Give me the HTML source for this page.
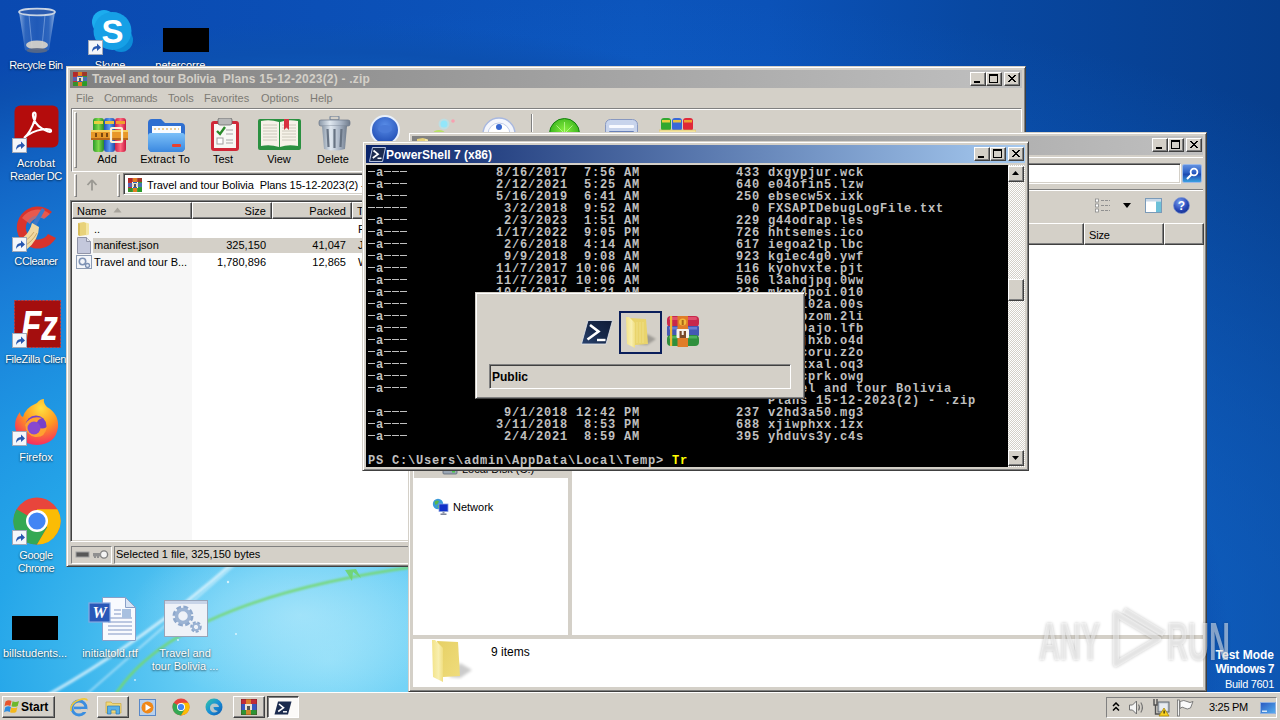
<!DOCTYPE html>
<html><head><meta charset="utf-8"><title>Desktop</title>
<style>
*{box-sizing:border-box;margin:0;padding:0}
html,body{width:1280px;height:720px;overflow:hidden}
body{position:relative;font-family:"Liberation Sans",sans-serif;font-size:11px;color:#000;
background:#0b4eae;}
.abs{position:absolute}
#wall{position:absolute;left:0;top:0;width:1280px;height:720px;
background:
radial-gradient(ellipse 170px 90px at 300px 615px, rgba(200,240,253,.5) 0%, rgba(200,240,253,.25) 50%, rgba(200,240,253,0) 100%),
radial-gradient(ellipse 900px 640px at 330px 660px, #8adcf8 0%, #68cef5 15%, #3cb6ed 28%, #25a6e9 38%, #1e94e2 52%, #197dd7 68%, #1266c6 83%, #0c50b0 95%, rgba(12,80,176,0) 100%),
radial-gradient(ellipse 1150px 640px at 640px 640px, rgba(20,112,218,1) 0%, rgba(20,112,218,.7) 35%, rgba(20,112,218,.4) 65%, rgba(20,112,218,0) 100%),
linear-gradient(90deg,#0a49b0 0%,#0b4fb6 25%,#0c55bc 50%,#0b52b8 60%,#0848a2 76%,#063d8c 100%);}
.win{position:absolute;background:#d4d0c8;border:1px solid;border-color:#d4d0c8 #404040 #404040 #d4d0c8;box-shadow:inset 1px 1px 0 #fff, inset -1px -1px 0 #808080;}
.tbtn{position:absolute;width:16px;height:14px;background:#d4d0c8;border:1px solid;border-color:#fff #404040 #404040 #fff;box-shadow:inset -1px -1px 0 #808080;}
.raised{border:1px solid;border-color:#fff #404040 #404040 #fff;box-shadow:inset -1px -1px 0 #808080, inset 1px 1px 0 #d4d0c8;}
.sunken{border:1px solid;border-color:#808080 #fff #fff #808080;box-shadow:inset 1px 1px 0 #404040, inset -1px -1px 0 #d4d0c8;}
.d{color:transparent;background:repeating-linear-gradient(90deg,#c0c0c0 0,#c0c0c0 7px,transparent 7px,transparent 8px) no-repeat 0 5px/100% 1px}
.t{position:absolute;white-space:nowrap;line-height:13px}
.dl{position:absolute;color:#fff;text-align:center;font-size:11px;line-height:13px;width:90px;text-shadow:0 1px 2px rgba(0,0,0,.55),0 0 2px rgba(0,0,0,.3);white-space:nowrap}
</style></head><body>
<div id="wall"></div>
<svg id="swoosh" class="abs" style="left:0;top:560px" width="420" height="135" viewBox="0 560 420 135">
 <defs><filter id="bl"><feGaussianBlur stdDeviation=".8"/></filter></defs>
 <path d="M30 705 Q140 645 234 562" stroke="#f0fbff" stroke-width="3.200" fill="none" opacity=".7" filter="url(#bl)"/>
 <path d="M80 700 Q160 630 238 562" stroke="#eaf9ff" stroke-width="2" fill="none" opacity=".5" filter="url(#bl)"/>
 <path d="M112 700 Q170 600 420 566" stroke="#74d870" stroke-width="2.400" fill="none" filter="url(#bl)"/>
 <path d="M345 570 L352 581 L353 572 L361 578 L356 569Z" fill="#6fd46c" opacity=".9"/>
 <g fill="#fff" opacity=".7"><circle cx="228" cy="582" r="1.200"/><circle cx="178" cy="640" r="1"/><circle cx="135" cy="680" r="1"/><circle cx="236" cy="634" r="1"/></g>
</svg>
<!-- Recycle bin -->
<svg class="abs" style="left:17px;top:7px" width="40" height="48" viewBox="0 0 40 48"><defs><linearGradient id="rb" x1="0" y1="0" x2="1" y2="0"><stop offset="0" stop-color="#b8d0f0" stop-opacity=".75"/><stop offset=".18" stop-color="#4a7cc8" stop-opacity=".55"/><stop offset=".5" stop-color="#3a6cc0" stop-opacity=".45"/><stop offset=".82" stop-color="#4a7cc8" stop-opacity=".55"/><stop offset="1" stop-color="#b8d0f0" stop-opacity=".75"/></linearGradient></defs><path d="M2 5 L8 43 Q20 48 32 43 L38 5Z" fill="url(#rb)"/><path d="M12 8 L15 40 M28 8 L25 40" stroke="#a8c4ec" stroke-width="1" opacity=".5"/><ellipse cx="20" cy="5" rx="18" ry="3.400" fill="#2c5cb0" stroke="#c8d4e4" stroke-width="1.700"/><ellipse cx="20" cy="38" rx="11" ry="4.500" fill="#dcd6ca" opacity=".9"/><ellipse cx="20" cy="43.500" rx="10.500" ry="2.600" fill="#5c6880" opacity=".85"/></svg>
<div class="dl" style="left:-9px;top:59px;letter-spacing:-.4px">Recycle Bin</div>
<!-- Skype -->
<svg class="abs" style="left:88px;top:8px" width="48" height="48" viewBox="0 0 48 48"><circle cx="16" cy="14" r="12" fill="#1cacee"/><circle cx="33" cy="32" r="12" fill="#0c8cd8"/><circle cx="24.500" cy="23" r="19" fill="#16a0e6"/><text x="24.500" y="35" text-anchor="middle" font-family="Liberation Sans,sans-serif" font-weight="bold" font-size="33" fill="#fff">S</text><rect x=".5" y="32.500" width="14" height="14" fill="#f4f6fa" stroke="#a0a8b8"/><path d="M4 44 Q4 38 9 38 V35.500 L13 39.500 L9 43 V40.500 Q6 40.500 4 44Z" fill="#2858b0"/></svg>
<div class="dl" style="left:65px;top:59px">Skype</div>
<!-- redacted -->
<div class="abs" style="left:163px;top:28px;width:46px;height:24px;background:#000"></div>
<div class="dl" style="left:140px;top:59px">petercorre...</div>
<!-- Acrobat -->
<svg class="abs" style="left:12px;top:105px" width="48" height="48" viewBox="0 0 48 48"><rect x="2.5" y=".5" width="44" height="42" rx="6" fill="#b40c0c"/><path d="M12 33 Q19 27 23 14 Q24.5 8 22.5 7.5 Q20 7.5 21.5 13 Q24 22 36 26.5 Q39.5 27.5 39 25.5 Q38 23.5 30 24.5 Q20 26 12 33Z" fill="none" stroke="#fff" stroke-width="2.2"/><rect x=".5" y="33.5" width="14" height="14" fill="#f4f6fa" stroke="#a0a8b8"/><path d="M4 45 Q4 39 9 39 V36.5 L13 40.5 L9 44 V41.5 Q6 41.5 4 45Z" fill="#2858b0"/></svg>
<div class="dl" style="left:-9px;top:157px">Acrobat</div>
<div class="dl" style="left:-9px;top:170px;letter-spacing:-.35px">Reader DC</div>
<!-- CCleaner -->
<svg class="abs" style="left:12px;top:204px" width="48" height="48" viewBox="0 0 48 48"><path d="M40 8 A21 21 0 1 0 44 34 L36 30 A12 12 0 1 1 33 14Z" fill="#d8342c"/><path d="M38 10 A19 19 0 0 0 10 14 L18 20 A10 10 0 0 1 32 15Z" fill="#f06a5c" opacity=".7"/><path d="M30 4 L33 6 L24 22 L20 20Z" fill="#3c78c8"/><path d="M20 19 L27 23 Q27 36 14 46 Q6 44 3 37 Q16 34 20 19Z" fill="#f0d8a0"/><path d="M8 38 Q16 37 22 28 M12 42 Q20 38 25 29" stroke="#c8a868" stroke-width="1" fill="none"/><rect x=".5" y="33.5" width="14" height="14" fill="#f4f6fa" stroke="#a0a8b8"/><path d="M4 45 Q4 39 9 39 V36.5 L13 40.5 L9 44 V41.5 Q6 41.5 4 45Z" fill="#2858b0"/></svg>
<div class="dl" style="left:-9px;top:255px;letter-spacing:-.4px">CCleaner</div>
<!-- FileZilla -->
<svg class="abs" style="left:12px;top:300px" width="50" height="50" viewBox="0 0 50 50"><rect x="2.500" y=".5" width="46" height="47" fill="#a40e0e" stroke="#c43c3c" stroke-dasharray="2 1.500"/><text x="9" y="40" font-family="Liberation Sans,sans-serif" font-weight="bold" font-style="italic" font-size="42" fill="#fff" textLength="37" lengthAdjust="spacingAndGlyphs">Fz</text><rect x=".5" y="33.500" width="14" height="14" fill="#f4f6fa" stroke="#a0a8b8"/><path d="M4 45 Q4 39 9 39 V36.500 L13 40.500 L9 44 V41.500 Q6 41.500 4 45Z" fill="#2858b0"/></svg>
<div class="abs" style="left:0;top:352px;width:66px;height:16px;overflow:hidden"><div class="dl" style="left:-3px;top:1px;width:80px;letter-spacing:-.35px">FileZilla Client</div></div>
<!-- Firefox -->
<svg class="abs" style="left:12px;top:398px" width="50" height="50" viewBox="0 0 50 50"><defs><radialGradient id="ff" cx=".6" cy=".2" r=".9"><stop offset="0" stop-color="#ffe040"/><stop offset=".45" stop-color="#ff9820"/><stop offset=".85" stop-color="#f83858"/><stop offset="1" stop-color="#d82878"/></radialGradient></defs><path d="M25 5 Q28 1 32 1 Q31 5 35 9 Q47 16 46 29 Q44 46 25 47 Q5 46 3 28 Q3 20 8 14 Q8 18 11 19 Q13 10 25 5Z" fill="url(#ff)"/><circle cx="24" cy="28" r="10.5" fill="#7840c8"/><path d="M13 27 Q18 17 30 20 Q24 22 25 27 Q28 33 35 29 Q33 40 23 39 Q14 37 13 27Z" fill="#ffa030"/><circle cx="22" cy="30" r="6.5" fill="#8848d0"/><rect x=".5" y="33.5" width="14" height="14" fill="#f4f6fa" stroke="#a0a8b8"/><path d="M4 45 Q4 39 9 39 V36.5 L13 40.5 L9 44 V41.5 Q6 41.5 4 45Z" fill="#2858b0"/></svg>
<div class="dl" style="left:-9px;top:451px">Firefox</div>
<!-- Chrome -->
<svg class="abs" style="left:12px;top:497px" width="50" height="50" viewBox="0 0 50 50"><circle cx="25" cy="24" r="23.5" fill="#e8453c"/><path d="M25 24 L4.6 12.2 A23.5 23.5 0 0 0 25 47.5 L35.4 30Z" fill="#34a853"/><path d="M25 24 L35.4 30 L25 47.5 A23.5 23.5 0 0 0 45.4 12.2 H25Z" fill="#fbbc05"/><circle cx="25" cy="24" r="11" fill="#fff"/><circle cx="25" cy="24" r="8.6" fill="#4285f4"/><rect x=".5" y="33.5" width="14" height="14" fill="#f4f6fa" stroke="#a0a8b8"/><path d="M4 45 Q4 39 9 39 V36.5 L13 40.5 L9 44 V41.5 Q6 41.5 4 45Z" fill="#2858b0"/></svg>
<div class="dl" style="left:-9px;top:549px;letter-spacing:-.35px">Google</div>
<div class="dl" style="left:-9px;top:562px;letter-spacing:-.45px">Chrome</div>
<!-- redacted 2 -->
<div class="abs" style="left:12px;top:616px;width:46px;height:24px;background:#000"></div>
<div class="dl" style="left:-10px;top:647px">billstudents...</div>
<!-- word doc -->
<svg class="abs" style="left:88px;top:596px" width="49" height="46" viewBox="0 0 49 46"><path d="M14.5 1.500 H37.5 L47.500 11.500 V44.500 H14.500Z" fill="#f8fafe" stroke="#8aa0c8"/><path d="M37.500 1.500 V11.500 H47.500Z" fill="#d8e4f4" stroke="#8aa0c8"/><g stroke="#a8b8d8" stroke-width="1.300"><path d="M20 22 H44 M20 26 H44 M20 30 H44 M20 34 H44 M20 38 H44 M26 14 H33 M26 18 H33"/></g><rect x="34" y="13" width="9" height="9" fill="#a8c0e0"/><rect x="1" y="7" width="21" height="19" fill="#2858b8" stroke="#88a8e0" stroke-width="1.200"/><text x="11.500" y="22" text-anchor="middle" font-family="Liberation Serif,serif" font-weight="bold" font-style="italic" font-size="16" fill="#fff">W</text></svg>
<div class="dl" style="left:65px;top:647px">initialtold.rtf</div>
<!-- batch -->
<svg class="abs" style="left:164px;top:600px" width="45" height="38" viewBox="0 0 45 38"><rect x=".5" y=".5" width="43" height="36" fill="#eef2f8" stroke="#98a4b8"/><rect x="1" y="1" width="42" height="3" fill="#c8d4e8"/><circle cx="19" cy="16" r="8" fill="none" stroke="#8ea8cc" stroke-width="5" stroke-dasharray="4.200 2.100"/><circle cx="19" cy="16" r="6.500" fill="none" stroke="#9cb4d4" stroke-width="3.500"/><circle cx="32" cy="27" r="4" fill="none" stroke="#8ea8cc" stroke-width="3.500" stroke-dasharray="2.500 1.400"/><circle cx="32" cy="27" r="3.200" fill="none" stroke="#9cb4d4" stroke-width="2"/></svg>
<div class="dl" style="left:140px;top:647px">Travel and</div>
<div class="dl" style="left:140px;top:660px">tour Bolivia ...</div>
<!-- test mode -->
<div class="t" style="left:1175px;top:648px;width:99px;text-align:right;color:#fff;font-weight:bold;font-size:12px;line-height:14px">Test Mode</div>
<div class="t" style="left:1175px;top:662px;width:99px;text-align:right;color:#fff;font-weight:bold;font-size:12px;line-height:14px;letter-spacing:-.45px">Windows 7</div>
<div class="t" style="left:1175px;top:678px;width:99px;text-align:right;color:#fff;font-size:11px;letter-spacing:-.3px">Build 7601</div>
<!--DESKTOP_END-->
<div id="winrar" class="win" style="left:66px;top:66px;width:960px;height:501px">
 <div class="abs" style="left:3px;top:3px;width:952px;height:18px;background:linear-gradient(90deg,#808080,#c0c0c0)"></div>
 <svg class="abs" style="left:5px;top:4px" width="16" height="16" viewBox="0 0 16 16"><rect x="1" y="1" width="4" height="14" fill="#c03030"/><rect x="6" y="1" width="4" height="14" fill="#3060c0"/><rect x="11" y="1" width="4" height="14" fill="#30a030"/><rect x="1" y="1" width="14" height="4" fill="#b02828" opacity=".85"/><rect x="1" y="6" width="14" height="4" fill="#4868c8" opacity=".85"/><rect x="1" y="11" width="14" height="4" fill="#2a9a2a" opacity=".9"/><rect x="6" y="1" width="4" height="4" fill="#e08020"/><rect x="6" y="11" width="4" height="4" fill="#e08020"/><rect x="5" y="6" width="6" height="4" fill="#e8e0d0"/><rect x="7" y="7" width="2" height="3" fill="#555"/></svg>
 <div class="t" style="left:25px;top:5px;font-weight:bold;font-size:12px;color:#d4d0c8;line-height:14px;white-space:pre"><span style="letter-spacing:-.22px">Travel and tour Bolivia</span><span style="letter-spacing:.2px">  Plans 15-12-2023(2) - .zip</span></div>
 <div class="tbtn" style="left:903px;top:5px"><div class="abs" style="left:3px;top:8px;width:6px;height:2px;background:#000"></div></div>
 <div class="tbtn" style="left:919px;top:5px"><div class="abs" style="left:2px;top:1px;width:9px;height:9px;border:1px solid #000;border-top-width:2px"></div></div>
 <div class="tbtn" style="left:937px;top:5px"><svg class="abs" style="left:3px;top:2px" width="8" height="7" viewBox="0 0 8 7"><path d="M0 0 L7 7 M1 0 L8 7 M7 0 L0 7 M8 0 L1 7" stroke="#000" stroke-width="1" shape-rendering="crispEdges"/></svg></div>
 <!-- menu -->
 <div class="t" style="left:9px;top:25px;color:#7c7a74">File</div>
 <div class="t" style="left:37px;top:25px;color:#7c7a74;letter-spacing:-.4px">Commands</div>
 <div class="t" style="left:101px;top:25px;color:#7c7a74">Tools</div>
 <div class="t" style="left:137px;top:25px;color:#7c7a74">Favorites</div>
 <div class="t" style="left:194px;top:25px;color:#7c7a74">Options</div>
 <div class="t" style="left:243px;top:25px;color:#7c7a74">Help</div>
 <!-- toolbar frame -->
 <div class="abs" style="left:4px;top:41px;width:951px;height:64px;border:1px solid;border-color:#808080 #fff #fff #808080;box-shadow:inset 1px 1px 0 #fff"></div>
 <div class="abs" style="left:7px;top:45px;width:3px;height:56px;border:1px solid;border-color:#fff #808080 #808080 #fff"></div>
  <!-- Add -->
 <svg class="abs" style="left:24px;top:50px" width="37" height="36" viewBox="0 0 37 36"><defs><linearGradient id="bk1" x1="0" x2="1"><stop offset="0" stop-color="#2a9a2a"/><stop offset=".5" stop-color="#7ed84a"/><stop offset="1" stop-color="#2a8a2a"/></linearGradient><linearGradient id="bk2" x1="0" x2="1"><stop offset="0" stop-color="#2050b8"/><stop offset=".5" stop-color="#5a9af0"/><stop offset="1" stop-color="#2048a8"/></linearGradient><linearGradient id="bk3" x1="0" x2="1"><stop offset="0" stop-color="#d02048"/><stop offset=".5" stop-color="#ff6a80"/><stop offset="1" stop-color="#c81840"/></linearGradient></defs><rect x="2" y="1" width="11" height="34" rx="3" fill="url(#bk1)"/><rect x="13" y="1" width="11" height="34" rx="3" fill="url(#bk2)"/><rect x="24" y="1" width="11" height="34" rx="3" fill="url(#bk3)"/><rect x="3" y="4" width="9" height="3" fill="#e8d040"/><rect x="14" y="4" width="9" height="3" fill="#e8c040"/><rect x="25" y="4" width="9" height="3" fill="#f0a030"/><rect x="0" y="13" width="37" height="10" fill="#e89828"/><rect x="0" y="13" width="37" height="2" fill="#f8d060"/><rect x="0" y="21" width="37" height="2" fill="#b86818"/><rect x="20" y="11" width="11" height="14" rx="1" fill="none" stroke="#f8f0d8" stroke-width="2.2"/><rect x="4" y="16" width="2" height="4" fill="#7a4810"/><rect x="10" y="16" width="2" height="4" fill="#7a4810"/><rect x="15" y="16" width="2" height="4" fill="#7a4810"/></svg>
 <div class="t" style="left:18px;top:86px;width:44px;text-align:center">Add</div>
 <!-- Extract To -->
 <svg class="abs" style="left:80px;top:50px" width="40" height="36" viewBox="0 0 40 36"><defs><linearGradient id="ex1" x1="0" y1="0" x2="0" y2="1"><stop offset="0" stop-color="#7cc0f8"/><stop offset="1" stop-color="#3a88e0"/></linearGradient></defs><path d="M1 6 Q1 2 5 2 H14 L18 6 H34 Q38 6 38 10 V30 Q38 35 33 35 H6 Q1 35 1 30Z" fill="#2f6fd0"/><rect x="5" y="9" width="29" height="12" fill="#f8fbff"/><path d="M7 12 H32" stroke="#e0a030" stroke-width="1.2" stroke-dasharray="2 2"/><path d="M1 19 Q1 16 4 16 H35 Q38 16 38 19 V30 Q38 35 33 35 H6 Q1 35 1 30Z" fill="url(#ex1)"/><rect x="25" y="27" width="9" height="3" rx="1" fill="#e84030"/></svg>
 <div class="t" style="left:68px;top:86px;width:60px;text-align:center;letter-spacing:.1px">Extract To</div>
 <!-- Test -->
 <svg class="abs" style="left:143px;top:51px" width="30" height="34" viewBox="0 0 30 34"><rect x="1" y="3" width="28" height="30" rx="3" fill="#d02838"/><rect x="4" y="6" width="22" height="24" fill="#f8f8f4"/><rect x="8" y="0" width="14" height="7" rx="2" fill="#b8b8b8" stroke="#686868" stroke-width=".8"/><path d="M7 13 L10 16 L15 9" stroke="#2a8a2a" stroke-width="2.4" fill="none"/><rect x="7" y="20" width="6" height="6" fill="#fff" stroke="#a0a0a0"/><path d="M16 12 H23 M16 16 H23 M16 22 H23 M16 25 H23" stroke="#a8a8a8" stroke-width="1.2"/></svg>
 <div class="t" style="left:134px;top:86px;width:44px;text-align:center">Test</div>
 <!-- View -->
 <svg class="abs" style="left:191px;top:51px" width="43" height="33" viewBox="0 0 43 33"><rect x="0" y="1" width="43" height="31" rx="2" fill="#2a9040"/><path d="M3 3 Q12 1 21 4 V29 Q12 26 3 28Z" fill="#f6f2e8"/><path d="M40 3 Q30 1 22 4 V29 Q30 26 40 28Z" fill="#f6f2e8"/><g stroke="#c8c4b8" stroke-width=".9"><path d="M5 7 H19 M5 10 H19 M5 13 H19 M5 16 H19 M5 19 H19 M5 22 H19 M24 7 H38 M24 10 H38 M24 13 H38 M24 16 H38 M24 19 H38 M24 22 H38"/></g><path d="M26 1 H31 V12 L28.500 9.500 L26 12Z" fill="#d83040"/></svg>
 <div class="t" style="left:190px;top:86px;width:44px;text-align:center">View</div>
 <!-- Delete -->
 <svg class="abs" style="left:251px;top:49px" width="33" height="36" viewBox="0 0 33 36"><defs><linearGradient id="dl1" x1="0" x2="1"><stop offset="0" stop-color="#8a98a8"/><stop offset=".35" stop-color="#e0e8f0"/><stop offset=".7" stop-color="#a8b4c4"/><stop offset="1" stop-color="#707c8c"/></linearGradient></defs><rect x="12" y="0" width="9" height="4" rx="1.500" fill="none" stroke="#8894a4" stroke-width="1.400"/><rect x="1" y="4" width="31" height="6" rx="2" fill="url(#dl1)" stroke="#6a7686" stroke-width=".7"/><path d="M4 10 H29 L27 33 Q16.500 36 6 33Z" fill="url(#dl1)"/><path d="M9.500 13 L10.500 31 M16.500 13 V32 M23.500 13 L22.500 31" stroke="#687484" stroke-width="2.200"/></svg>
 <div class="t" style="left:243px;top:86px;width:46px;text-align:center">Delete</div>
 <!-- Find -->
 <svg class="abs" style="left:301px;top:46px" width="34" height="34" viewBox="0 0 34 34"><defs><radialGradient id="fd" cx=".5" cy=".35" r=".7"><stop offset="0" stop-color="#5a8ee8"/><stop offset="1" stop-color="#1c48b0"/></radialGradient></defs><circle cx="17" cy="17" r="14" fill="url(#fd)" stroke="#e8f0fc" stroke-width="2"/><ellipse cx="17" cy="16" rx="7" ry="4" fill="#4a7ad8"/></svg>
 <!-- Wizard -->
 <svg class="abs" style="left:364px;top:50px" width="28" height="20" viewBox="0 0 28 20"><circle cx="13" cy="7" r="3.500" fill="#7ce0f8"/><circle cx="13" cy="7" r="5.500" fill="#a8ecfc" opacity=".5"/><circle cx="22" cy="4" r="1.800" fill="#f8a0b0"/><ellipse cx="8" cy="16" rx="6" ry="3" fill="#b8e068"/><path d="M14 16 L17 19" stroke="#404040" stroke-width="2"/></svg>
 <!-- Info -->
 <svg class="abs" style="left:415px;top:50px" width="34" height="34" viewBox="0 0 34 34"><circle cx="17" cy="17" r="16" fill="#f4f6fc" stroke="#a8b8e0" stroke-width="1.400"/><circle cx="17" cy="17" r="11" fill="#fff" stroke="#c0cce8"/><circle cx="17" cy="10" r="3" fill="#3868d0"/><rect x="14" y="15" width="6" height="12" fill="#3868d0"/></svg>
 <div class="abs" style="left:464px;top:47px;width:2px;height:38px;border-left:1px solid #808080;border-right:1px solid #fff"></div>
 <!-- VirusScan -->
 <svg class="abs" style="left:482px;top:51px" width="31" height="31" viewBox="0 0 31 31"><defs><radialGradient id="vs" cx=".5" cy=".4" r=".7"><stop offset="0" stop-color="#88f040"/><stop offset="1" stop-color="#1c9c10"/></radialGradient></defs><circle cx="15.500" cy="15.500" r="15" fill="url(#vs)" stroke="#148010"/><path d="M15.500 4 V27 M4 15.500 H27 M7.500 7.500 L23.500 23.500 M23.500 7.500 L7.500 23.500" stroke="#c8ffa0" stroke-width="1" opacity=".7"/></svg>
 <!-- Comment -->
 <svg class="abs" style="left:538px;top:52px" width="33" height="28" viewBox="0 0 33 28"><rect x=".5" y=".5" width="32" height="27" rx="5" fill="#c8d4ec" stroke="#8898c0"/><rect x="4" y="6" width="25" height="3" rx="1" fill="#f8faff"/><rect x="4" y="12" width="25" height="3" rx="1" fill="#6880b8"/><rect x="4" y="18" width="25" height="3" rx="1" fill="#f8faff"/></svg>
 <!-- SFX -->
 <svg class="abs" style="left:592px;top:50px" width="37" height="32" viewBox="0 0 37 32"><rect x="2" y="1" width="10" height="13" rx="3" fill="#30a830"/><rect x="13" y="1" width="10" height="13" rx="3" fill="#3868d8"/><rect x="24" y="1" width="10" height="13" rx="3" fill="#e02838"/><rect x="3" y="3" width="8" height="2.500" fill="#e8d040"/><rect x="14" y="3" width="8" height="2.500" fill="#e8c040"/><rect x="25" y="3" width="8" height="2.500" fill="#f0a030"/><rect x="0" y="13" width="37" height="5" fill="#f4e4a0" stroke="#d0b860" stroke-width=".6"/></svg>

 <!-- address row -->
 <div class="abs" style="left:7px;top:107px;width:3px;height:23px;border:1px solid;border-color:#fff #808080 #808080 #fff"></div>
 <svg class="abs" style="left:18px;top:111px" width="14" height="14" viewBox="0 0 14 14"><path d="M7 2 L2.5 7 M7 2 L11.5 7 M7 2 V12.5" stroke="#9a9892" stroke-width="1.8" fill="none"/></svg>
 <div class="abs" style="left:50px;top:107px;width:3px;height:23px;border:1px solid;border-color:#fff #808080 #808080 #fff"></div>
 <div class="abs sunken" style="left:56px;top:106px;width:900px;height:22px;background:#fff"></div>
 <svg class="abs" style="left:60px;top:110px" width="16" height="16" viewBox="0 0 16 16"><rect x="1" y="1" width="4" height="14" fill="#c03030"/><rect x="6" y="1" width="4" height="14" fill="#3060c0"/><rect x="11" y="1" width="4" height="14" fill="#30a030"/><rect x="1" y="1" width="14" height="4" fill="#b02828" opacity=".85"/><rect x="1" y="6" width="14" height="4" fill="#4868c8" opacity=".85"/><rect x="1" y="11" width="14" height="4" fill="#2a9a2a" opacity=".9"/><rect x="6" y="1" width="4" height="4" fill="#e08020"/><rect x="6" y="11" width="4" height="4" fill="#e08020"/><rect x="5" y="6" width="6" height="4" fill="#e8e0d0"/><rect x="7" y="7" width="2" height="3" fill="#555"/></svg>
 <div class="t" style="left:80px;top:112px;white-space:pre;letter-spacing:-.1px">Travel and tour Bolivia  Plans 15-12-2023(2) - .zip</div>
 <!-- list -->
 <div class="abs sunken" style="left:3px;top:133px;width:953px;height:342px;background:#fff"></div>
 <div class="abs" style="left:5px;top:153px;width:120px;height:320px;background:#f7f7f7"></div>
 <div class="abs raised" style="left:5px;top:135px;width:120px;height:17px;background:#d4d0c8"></div>
 <div class="abs raised" style="left:125px;top:135px;width:80px;height:17px;background:#d4d0c8"></div>
 <div class="abs raised" style="left:205px;top:135px;width:80px;height:17px;background:#d4d0c8"></div>
 <div class="abs raised" style="left:285px;top:135px;width:80px;height:17px;background:#d4d0c8"></div>
 <div class="t" style="left:10px;top:138px">Name</div>
 <svg class="abs" style="left:46px;top:140px" width="9" height="6" viewBox="0 0 9 6"><path d="M4.5 .5 L8.5 5.5 H.5Z" fill="#a8a49c"/></svg>
 <div class="t" style="left:125px;top:138px;width:74px;text-align:right">Size</div>
 <div class="t" style="left:205px;top:138px;width:74px;text-align:right">Packed</div>
 <div class="t" style="left:290px;top:138px">Type</div>
 <!-- rows -->
 <svg class="abs" style="left:9px;top:154px" width="16" height="16" viewBox="0 0 16 16"><path d="M2 2 L8 1 L10 2 V14 L4 15 L2 14Z" fill="#e8d27a"/><path d="M8 1 L13 2.5 V13.5 L10 14.5 V2Z" fill="#f4e6a4"/><path d="M2 2 V14 L4 15 V3Z" fill="#d8bd5c"/></svg>
 <div class="t" style="left:27px;top:156px">..</div>
 <div class="t" style="left:291px;top:156px">File folder</div>
 <div class="abs" style="left:26px;top:171px;width:928px;height:15px;background:#d4d0c8"></div>
 <svg class="abs" style="left:10px;top:170px" width="14" height="17" viewBox="0 0 14 17"><path d="M.5 .5 H9.5 L13.5 4.5 V16.5 H.5Z" fill="#c4c8dc" stroke="#9094a8"/><path d="M9.5 .5 V4.5 H13.5" fill="#e4e6f0" stroke="#9094a8"/></svg>
 <div class="t" style="left:27px;top:172px">manifest.json</div>
 <div class="t" style="left:125px;top:172px;width:74px;text-align:right">325,150</div>
 <div class="t" style="left:205px;top:172px;width:74px;text-align:right">41,047</div>
 <div class="t" style="left:291px;top:172px">JSON File</div>
 <svg class="abs" style="left:9px;top:188px" width="17" height="16" viewBox="0 0 17 16"><rect x=".5" y=".5" width="15" height="13" fill="#f4f6fa" stroke="#8e9cb4"/><circle cx="6.5" cy="6.5" r="3.2" fill="none" stroke="#7e92b4" stroke-width="1.6"/><circle cx="11.5" cy="10.5" r="2" fill="#e8eef8" stroke="#7e92b4" stroke-width="1.3"/></svg>
 <div class="t" style="left:27px;top:189px">Travel and tour B...</div>
 <div class="t" style="left:125px;top:189px;width:74px;text-align:right">1,780,896</div>
 <div class="t" style="left:205px;top:189px;width:74px;text-align:right">12,865</div>
 <div class="t" style="left:291px;top:189px">Windows Batch File</div>
 <!-- status -->
 <div class="abs" style="left:4px;top:479px;width:41px;height:18px;border:1px solid;border-color:#808080 #fff #fff #808080"></div>
 <div class="abs" style="left:47px;top:479px;width:909px;height:18px;border:1px solid;border-color:#808080 #fff #fff #808080"></div>
 <svg class="abs" style="left:8px;top:482px" width="36" height="12" viewBox="0 0 36 12"><rect x="1" y="3" width="13" height="5" fill="#585858" stroke="#a0a0a0"/><circle cx="29" cy="5.5" r="3.6" fill="#f4f4f4" stroke="#808080" stroke-width="1.4"/><rect x="18" y="4" width="8" height="3.4" fill="#909090"/><rect x="19" y="7" width="2" height="2" fill="#909090"/><rect x="22" y="7" width="2" height="2" fill="#909090"/></svg>
 <div class="t" style="left:49px;top:481px">Selected 1 file, 325,150 bytes</div>
</div>
<!--WINRAR_END-->
<div id="explorer" class="win" style="left:408px;top:132px;width:799px;height:560px">
 <div class="abs" style="left:3px;top:3px;width:791px;height:19px;background:linear-gradient(90deg,#808080,#c0c0c0)"></div>
 <svg class="abs" style="left:6px;top:4px" width="16" height="16" viewBox="0 0 16 16"><path d="M2 2 L8 1 L10 2 V14 L4 15 L2 14Z" fill="#e8d27a"/><path d="M8 1 L13 2.5 V13.5 L10 14.5 V2Z" fill="#f4e6a4"/></svg>
 <div class="t" style="left:26px;top:6px;font-weight:bold;font-size:12px;color:#d4d0c8;line-height:14px">Public</div>
 <div class="tbtn" style="left:743px;top:5px"><div class="abs" style="left:3px;top:8px;width:6px;height:2px;background:#000"></div></div>
 <div class="tbtn" style="left:759px;top:5px"><div class="abs" style="left:2px;top:1px;width:9px;height:9px;border:1px solid #000;border-top-width:2px"></div></div>
 <div class="tbtn" style="left:777px;top:5px"><svg class="abs" style="left:3px;top:2px" width="8" height="7" viewBox="0 0 8 7"><path d="M0 0 L7 7 M1 0 L8 7 M7 0 L0 7 M8 0 L1 7" stroke="#000" stroke-width="1" shape-rendering="crispEdges"/></svg></div>
 <!-- address/search row -->
 <div class="abs" style="left:3px;top:24px;width:791px;height:1px;background:#fff"></div>
 <div class="abs sunken" style="left:40px;top:30px;width:560px;height:21px;background:#fff"></div>
 <div class="abs sunken" style="left:606px;top:30px;width:166px;height:21px;background:#fff"></div>
 <div class="abs" style="left:773px;top:31px;width:20px;height:19px;border-radius:2px;background:linear-gradient(180deg,#5f8fe0 0%,#2c5fc4 45%,#1c48b0 55%,#3aa0e0 100%);border:1px solid #9ab8e8"></div>
 <svg class="abs" style="left:776px;top:33px" width="15" height="15" viewBox="0 0 15 15"><circle cx="9" cy="6" r="3.4" fill="none" stroke="#fff" stroke-width="1.8"/><path d="M6.5 8.5 L2 13" stroke="#fff" stroke-width="2.2"/></svg>
 <div class="abs" style="left:3px;top:56px;width:791px;height:1px;background:#808080"></div>
 <div class="abs" style="left:3px;top:57px;width:791px;height:1px;background:#fff"></div>
 <!-- toolbar -->
 <div class="t" style="left:14px;top:67px;font-size:12px">Organize ▾</div>
 <svg class="abs" style="left:686px;top:65px" width="16" height="15" viewBox="0 0 16 15"><g fill="#fff" stroke="#8a8a8a" stroke-width=".8"><rect x=".5" y="1" width="3" height="3"/><rect x=".5" y="6" width="3" height="3"/><rect x=".5" y="11" width="3" height="3"/></g><g stroke="#909090" stroke-width="1"><path d="M6 2.5 H15 M6 7.5 H15 M6 12.5 H15" stroke-dasharray="3 1"/></g></svg>
 <svg class="abs" style="left:714px;top:70px" width="8" height="5" viewBox="0 0 8 5"><path d="M0 0 H8 L4 5Z" fill="#000"/></svg>
 <svg class="abs" style="left:736px;top:65px" width="17" height="15" viewBox="0 0 17 15"><rect x=".5" y=".5" width="16" height="14" fill="#fff" stroke="#7a9ab8"/><rect x="1" y="1" width="15" height="2.5" fill="#c8d8e8"/><rect x="11" y="3.5" width="5" height="10.5" fill="#6cc0d8"/></svg>
 <svg class="abs" style="left:764px;top:64px" width="17" height="17" viewBox="0 0 17 17"><defs><radialGradient id="hg" cx=".4" cy=".3" r=".8"><stop offset="0" stop-color="#7aa0f0"/><stop offset=".6" stop-color="#2848b8"/><stop offset="1" stop-color="#102880"/></radialGradient></defs><circle cx="8.5" cy="8.5" r="8" fill="url(#hg)" stroke="#8098d0" stroke-width=".8"/><text x="8.5" y="13" text-anchor="middle" font-family="Liberation Sans,sans-serif" font-weight="bold" font-size="12" fill="#fff">?</text></svg>
 <!-- nav pane + content -->
 <div class="abs" style="left:4px;top:89px;width:790px;height:465px;background:#fff"></div>
 <div class="abs" style="left:159px;top:89px;width:4px;height:413px;background:#d4d0c8"></div>
 <!-- header -->
 <div class="abs" style="left:163px;top:89px;width:632px;height:23px;background:#d4d0c8"></div>
 <div class="abs raised" style="left:163px;top:90px;width:512px;height:22px;background:#d4d0c8"></div>
 <div class="abs raised" style="left:675px;top:90px;width:80px;height:22px;background:#d4d0c8"></div>
 <div class="abs raised" style="left:755px;top:90px;width:40px;height:22px;background:#d4d0c8"></div>
 <div class="t" style="left:680px;top:96px;font-size:11px;letter-spacing:-.2px">Size</div>
 <div class="t" style="left:172px;top:96px;font-size:11px">Name</div>
 <!-- nav items -->
 <div class="abs" style="left:5px;top:330px;width:154px;height:15px;background:#d4d0c8"></div>
 <svg class="abs" style="left:33px;top:330px" width="16" height="14" viewBox="0 0 16 14"><rect x="1" y="3" width="14" height="8" rx="1" fill="#9aa6b4" stroke="#5a6674" stroke-width=".8"/><rect x="2" y="4" width="12" height="3" fill="#c8d4e0"/><rect x="10" y="8" width="3" height="1.500" fill="#48c848"/></svg><div class="t" style="left:53px;top:330px;font-size:11px">Local Disk (C:)</div>
 <svg class="abs" style="left:23px;top:365px" width="18" height="18" viewBox="0 0 18 18"><circle cx="6" cy="6" r="5.2" fill="#3a9ad8"/><path d="M2.5 4 Q5 1.5 7 3.5 Q6 6 3.5 7Z" fill="#58b848"/><path d="M6 7 Q8.5 6 9 9 Q7 10.5 5.5 9.5Z" fill="#58b848"/><rect x="7" y="6" width="9" height="7.5" fill="#1030c8" stroke="#88a0e0" stroke-width=".8"/><rect x="10.5" y="13.5" width="2" height="2" fill="#8890a8"/><rect x="8.5" y="15.5" width="6" height="1.4" fill="#707890"/></svg>
 <div class="t" style="left:44px;top:368px">Network</div>
 <!-- details pane -->
 <div class="abs" style="left:4px;top:502px;width:790px;height:4px;background:#d4d0c8"></div>
 <svg class="abs" style="left:22px;top:506px" width="44" height="44" viewBox="0 0 44 44"><defs><linearGradient id="fg1" x1="0" y1="0" x2="1" y2="0"><stop offset="0" stop-color="#f3e388"/><stop offset=".6" stop-color="#f8efb0"/><stop offset="1" stop-color="#f0de80"/></linearGradient><linearGradient id="fg2" x1="0" y1="0" x2="1" y2="1"><stop offset="0" stop-color="#e6d064"/><stop offset="1" stop-color="#efdc7c"/></linearGradient><filter id="fb"><feGaussianBlur stdDeviation="1.600"/></filter></defs><path d="M29 24 L41 31 L29 39 L18 38Z" fill="#000" opacity=".2" filter="url(#fb)"/><path d="M6 2 L27 3 L29 37 L12 38Z" fill="url(#fg2)"/><path d="M1 1 L4 1 L12 9 V43 L2 38Z" fill="url(#fg1)"/></svg>
 <div class="t" style="left:82px;top:513px;font-size:12px">9 items</div>
</div>
<!--EXPLORER_END-->
<div id="ps" class="win" style="left:362px;top:141px;width:667px;height:330px">
 <div class="abs" style="left:3px;top:3px;width:659px;height:18px;background:linear-gradient(90deg,#0a246a,#a6caf0)"></div>
 <svg class="abs" style="left:6px;top:5px" width="17" height="15" viewBox="0 0 17 15"><path d="M3.5 .5 H16.5 L13.5 14.5 H.5Z" fill="#1c2c50" stroke="#c8d4ec" stroke-width=".9"/><path d="M4.5 3.5 L9 7.2 L3.8 11" stroke="#fff" stroke-width="1.7" fill="none"/><path d="M8.5 11.3 H12.5" stroke="#fff" stroke-width="1.5"/></svg>
 <div class="t" style="left:23px;top:6px;font-weight:bold;font-size:12px;color:#fff;line-height:14px">PowerShell 7 (x86)</div>
 <div class="tbtn" style="left:611px;top:5px"><div class="abs" style="left:3px;top:8px;width:6px;height:2px;background:#000"></div></div>
 <div class="tbtn" style="left:627px;top:5px"><div class="abs" style="left:2px;top:1px;width:9px;height:9px;border:1px solid #000;border-top-width:2px"></div></div>
 <div class="tbtn" style="left:645px;top:5px"><svg class="abs" style="left:3px;top:2px" width="8" height="7" viewBox="0 0 8 7"><path d="M0 0 L7 7 M1 0 L8 7 M7 0 L0 7 M8 0 L1 7" stroke="#000" stroke-width="1" shape-rendering="crispEdges"/></svg></div>
 <div class="abs" style="left:3px;top:23px;width:642px;height:302px;background:#000"></div>
 <pre class="abs" style="left:5px;top:25px;font-family:'Liberation Mono',monospace;font-weight:bold;font-size:12px;letter-spacing:.8px;line-height:12px;color:#c0c0c0"><span class="d">-</span>a<span class="d">---</span>           8/16/2017  7:56 AM            433 dxgypjur.wck
<span class="d">-</span>a<span class="d">---</span>           2/12/2021  5:25 AM            640 e04ofin5.lzw
<span class="d">-</span>a<span class="d">---</span>           5/16/2019  6:41 AM            250 ebsecw5x.ixk
<span class="d">-----</span>            3/2/2018  9:52 AM              0 FXSAPIDebugLogFile.txt
<span class="d">-</span>a<span class="d">---</span>            2/3/2023  1:51 AM            229 g44odrap.les
<span class="d">-</span>a<span class="d">---</span>           1/17/2022  9:05 PM            726 hhtsemes.ico
<span class="d">-</span>a<span class="d">---</span>            2/6/2018  4:14 AM            617 iegoa2lp.lbc
<span class="d">-</span>a<span class="d">---</span>            9/9/2018  9:08 AM            923 kgiec4g0.ywf
<span class="d">-</span>a<span class="d">---</span>           11/7/2017 10:06 AM            116 kyohvxte.pjt
<span class="d">-</span>a<span class="d">---</span>           11/7/2017 10:06 AM            506 l3ahdjpq.0ww
<span class="d">-</span>a<span class="d">---</span>           10/5/2018  5:21 AM            338 mkpn4poi.010
<span class="d">-</span>a<span class="d">---</span>            6/2/2019  3:14 PM            871 n1u3102a.00s
<span class="d">-</span>a<span class="d">---</span>           4/21/2020 11:02 AM            412 ppq2bzom.2li
<span class="d">-</span>a<span class="d">---</span>            7/8/2018  2:47 AM            159 q0fw0ajo.lfb
<span class="d">-</span>a<span class="d">---</span>           12/1/2022  6:30 PM            764 qzddjhxb.o4d
<span class="d">-</span>a<span class="d">---</span>            1/9/2019  8:18 AM            301 rl2xcoru.z2o
<span class="d">-</span>a<span class="d">---</span>           8/30/2021  4:55 AM            588 sfdpxxal.oq3
<span class="d">-</span>a<span class="d">---</span>            5/5/2018  1:09 PM            947 t1kvcprk.owg
<span class="d">-</span>a<span class="d">---</span>          12/18/2023  3:24 PM          14108 Travel and tour Bolivia 
                                                  Plans 15-12-2023(2) - .zip
<span class="d">-</span>a<span class="d">---</span>            9/1/2018 12:42 PM            237 v2hd3a50.mg3
<span class="d">-</span>a<span class="d">---</span>           3/11/2018  8:53 PM            688 xjiwphxx.1zx
<span class="d">-</span>a<span class="d">---</span>            2/4/2021  8:59 AM            395 yhduvs3y.c4s

PS C:\Users\admin\AppData\Local\Temp&gt; <span style="color:#ffff00">Tr</span></pre>
 <!-- scrollbar -->
 <div class="abs" style="left:645px;top:23px;width:17px;height:302px;background:repeating-conic-gradient(#fff 0% 25%, #d4d0c8 0% 50%) 0 0/2px 2px"></div>
 <div class="abs raised" style="left:645px;top:24px;width:16px;height:16px;background:#d4d0c8"><svg class="abs" style="left:3px;top:4px" width="7" height="4" viewBox="0 0 7 4"><path d="M3.5 0 L7 4 H0Z" fill="#000"/></svg></div>
 <div class="abs raised" style="left:645px;top:137px;width:16px;height:22px;background:#d4d0c8"></div>
 <div class="abs raised" style="left:645px;top:308px;width:16px;height:16px;background:#d4d0c8"><svg class="abs" style="left:3px;top:5px" width="7" height="4" viewBox="0 0 7 4"><path d="M0 0 H7 L3.5 4Z" fill="#000"/></svg></div>
</div>
<!--POWERSHELL_END-->
<div id="alttab" class="abs" style="left:475px;top:292px;width:330px;height:107px;background:#d4d0c8;border:1px solid;border-color:#d4d0c8 #404040 #404040 #d4d0c8;box-shadow:inset 1px 1px 0 #fff, inset -1px -1px 0 #808080">
 <svg class="abs" style="left:105px;top:27px" width="32" height="25" viewBox="0 0 32 25"><defs><linearGradient id="psg" x1="0" y1="1" x2="1" y2="0"><stop offset="0" stop-color="#2a4470"/><stop offset=".5" stop-color="#16284a"/><stop offset="1" stop-color="#101c38"/></linearGradient></defs><path d="M7 .5 H31.500 L25 24 H.5Z" fill="url(#psg)" stroke="#e4e8f0" stroke-width=".8"/><path d="M9 5 L17.500 11.500 L6.500 19.500" stroke="#fff" stroke-width="2.600" fill="none"/><path d="M16 20 H24.500" stroke="#fff" stroke-width="2.400"/></svg>
 <div class="abs" style="left:143px;top:18px;width:43px;height:43px;border:2px solid #0a1e5a"></div>
 <svg class="abs" style="left:149px;top:23px" width="34" height="34" viewBox="0 0 34 34"><defs><filter id="fb2"><feGaussianBlur stdDeviation="1.200"/></filter></defs><path d="M22 18 L31 23 L22 29 L13 28Z" fill="#000" opacity=".25" filter="url(#fb2)"/><path d="M5 2 L21 3 L23 28 L10 29Z" fill="#e9d46c"/><path d="M1 1 L4 1 L10 7 V32 L2 28Z" fill="url(#fg1)"/><path d="M12 6 V27 M15 6 V27 M18 6 V27" stroke="#f4e898" stroke-width="1" opacity=".6"/></svg>
 <svg class="abs" style="left:190px;top:22px" width="34" height="33" viewBox="0 0 34 33"><rect x="1" y="1" width="32" height="11" rx="4" fill="#c8284c"/><rect x="1" y="11" width="32" height="10" rx="1" fill="#4458b4"/><rect x="1" y="20" width="32" height="11" rx="4" fill="#2f8f3c"/><rect x="3" y="2" width="28" height="3" rx="1.500" fill="#e8607c" opacity=".7"/><rect x="3" y="12" width="28" height="2.500" fill="#7c8ce0" opacity=".7"/><rect x="3" y="21" width="28" height="2.500" fill="#5cc068" opacity=".7"/><rect x="4" y="1" width="2.200" height="30" fill="#ecb838"/><rect x="11.500" y="1" width="10.500" height="31" fill="#e07c28"/><circle cx="16.700" cy="7" r="3.600" fill="#f4b83c"/><rect x="15.700" y="5" width="2" height="5" fill="#a86a18"/><rect x="10.500" y="14" width="12.500" height="9" rx="1" fill="#f8f4ec"/><rect x="13.500" y="16" width="6.500" height="7" fill="#7a4a2a"/><rect x="15.700" y="14" width="2" height="6" fill="#f8f4ec"/></svg>
 <div class="abs" style="left:13px;top:71px;width:302px;height:25px;border:1px solid;border-color:#808080 #fff #fff #808080;box-shadow:inset 1px 1px 0 #404040"></div>
 <div class="t" style="left:16px;top:77px;font-weight:bold;font-size:12px;line-height:14px">Public</div>
</div>
<!--ALTTAB_END-->
<svg id="wm" class="abs" style="left:1030px;top:600px;filter:drop-shadow(0 0 1.500px rgba(0,0,0,.45))" width="210" height="80" viewBox="0 0 210 80"><g fill="#fff" fill-opacity=".5" font-family="Liberation Sans,sans-serif" font-size="54" font-weight="bold"><text x="9" y="60" textLength="61" lengthAdjust="spacingAndGlyphs">ANY</text><text x="137" y="60" textLength="63" lengthAdjust="spacingAndGlyphs">RUN</text></g><path d="M86 14 L128 39 L86 64Z M94 10 L134 34" fill="none" stroke="#fff" stroke-opacity=".5" stroke-width="6" stroke-linejoin="round"/></svg>
<div id="taskbar" class="abs" style="left:0;top:692px;width:1280px;height:28px;background:#d4d0c8;border-top:1px solid #fff;box-shadow:0 -1px 0 #d4d0c8 inset">
 <div class="abs raised" style="left:2px;top:3px;width:53px;height:22px;background:#d4d0c8"></div>
 <svg class="abs" style="left:4px;top:6px" width="16" height="15" viewBox="0 0 16 15"><path d="M1.5 2.5 Q4.5 .5 7.5 2 L6.3 7 Q3.5 5.5 .5 7.2Z" fill="#e8542c"/><path d="M8.6 2.3 Q11.5 3.8 15 2 L13.7 7 Q10.5 8.6 7.5 7.2Z" fill="#6cb82c"/><path d="M.3 8.3 Q3.3 6.6 6 8 L4.8 13 Q2 11.6 -1 13.3Z" fill="#2c8ce0" transform="translate(1,0)"/><path d="M7.2 8.4 Q10.2 9.8 13.4 8.2 L12.2 13 Q9 14.6 6 13.2Z" fill="#f4b81c"/></svg>
 <div class="t" style="left:21px;top:7px;font-weight:bold;font-size:12px;line-height:14px">Start</div>
 <!-- IE -->
 <svg class="abs" style="left:69px;top:4px" width="20" height="20" viewBox="0 0 20 20"><circle cx="10" cy="11" r="7" fill="none" stroke="#3a8ee0" stroke-width="3"/><rect x="5" y="9.6" width="11" height="2.6" fill="#3a8ee0"/><rect x="12" y="12" width="6" height="3" fill="#d4d0c8"/><path d="M2 14 Q1 6 10 3 Q17 .5 18.5 3.5" fill="none" stroke="#f0c838" stroke-width="1.6"/></svg>
 <!-- explorer btn -->
 <div class="abs raised" style="left:97px;top:3px;width:32px;height:22px;background:#d4d0c8"></div>
 <svg class="abs" style="left:105px;top:6px" width="17" height="16" viewBox="0 0 17 16"><path d="M1 3 H6 L7.5 4.5 H16 V14 H1Z" fill="#f0d878" stroke="#c8a840" stroke-width=".7"/><path d="M2.5 7 H14.5 V15 H11 V11 H6 V15 H2.5Z" fill="#58b0e8" stroke="#2878b8" stroke-width=".7"/></svg>
 <!-- wmp -->
 <svg class="abs" style="left:139px;top:6px" width="17" height="17" viewBox="0 0 17 17"><rect x=".5" y=".5" width="16" height="16" fill="#b8d0ec" stroke="#5888c8"/><circle cx="8.5" cy="8.5" r="6" fill="#f08818"/><path d="M6.5 5 L12 8.5 L6.5 12Z" fill="#fff"/></svg>
 <!-- chrome -->
 <svg class="abs" style="left:172px;top:5px" width="18" height="18" viewBox="0 0 18 18"><circle cx="9" cy="9" r="8.5" fill="#e8453c"/><path d="M9 9 L1.6 4.8 A8.5 8.5 0 0 0 9 17.5 L12.8 11.2Z" fill="#34a853"/><path d="M9 9 L12.8 11.2 L9 17.5 A8.5 8.5 0 0 0 16.4 4.8 H9Z" fill="#fbbc05"/><circle cx="9" cy="9" r="4" fill="#fff"/><circle cx="9" cy="9" r="3.1" fill="#4285f4"/></svg>
 <!-- edge -->
 <svg class="abs" style="left:205px;top:5px" width="18" height="18" viewBox="0 0 18 18"><defs><linearGradient id="eg" x1="0" y1="0" x2="1" y2="1"><stop offset="0" stop-color="#36c8a0"/><stop offset=".5" stop-color="#1890d8"/><stop offset="1" stop-color="#0c58b0"/></linearGradient></defs><circle cx="9" cy="9" r="8.5" fill="url(#eg)"/><path d="M5 10 Q5 5.5 9.5 5.5 Q13.5 5.5 14 9 H8.5 Q8.5 12.5 13 13 Q9 16 6 13 Q5 12 5 10Z" fill="#d4d0c8" opacity=".85"/></svg>
 <!-- winrar btn -->
 <div class="abs raised" style="left:233px;top:3px;width:32px;height:22px;background:#d4d0c8"></div>
 <svg class="abs" style="left:241px;top:6px" width="16" height="16" viewBox="0 0 16 16"><rect x="0" y="0" width="16" height="5" fill="#c02c38"/><rect x="0" y="5" width="16" height="6" fill="#3858c0"/><rect x="0" y="11" width="16" height="5" fill="#2c9434"/><rect x="5" y="0" width="5" height="16" fill="#e08828" opacity=".9"/><rect x="4" y="5" width="7" height="6" fill="#ece4d4"/><rect x="6" y="7" width="3" height="4" fill="#555"/><rect x="0" y="0" width="16" height="16" fill="none" stroke="#602020" stroke-width=".6"/></svg>
 <!-- ps btn (pressed) -->
 <div class="abs" style="left:267px;top:3px;width:32px;height:22px;background:#fbfaf8;border:1px solid;border-color:#404040 #fff #fff #404040;box-shadow:inset 1px 1px 0 #808080"></div>
 <svg class="abs" style="left:274px;top:8px" width="18" height="14" viewBox="0 0 18 14"><path d="M4 .5 H17.5 L14 13.5 H.5Z" fill="#1b2b4e"/><path d="M5 3 L9.5 6.8 L4.2 10.5" stroke="#fff" stroke-width="1.6" fill="none"/><path d="M9 10.8 H13" stroke="#fff" stroke-width="1.4"/></svg>
 <!-- tray -->
 <div class="abs" style="left:1106px;top:4px;width:171px;height:21px;border:1px solid;border-color:#808080 #fff #fff #808080"></div>
 <svg class="abs" style="left:1112px;top:9px" width="8" height="10" viewBox="0 0 8 10"><path d="M1 4 L4 1 L7 4 M1 8.5 L4 5.5 L7 8.5" stroke="#000" stroke-width="1.5" fill="none"/></svg>
 <svg class="abs" style="left:1128px;top:6px" width="18" height="17" viewBox="0 0 18 17"><path d="M1.5 6 H4.5 L8.5 2 V15 L4.5 11 H1.5Z" fill="#f4f4f4" stroke="#707070" stroke-width="1"/><path d="M10.5 5.5 Q12.5 8.5 10.5 11.5 M12.8 3.5 Q16 8.5 12.8 13.5" stroke="#707070" stroke-width="1.1" fill="none"/></svg>
 <svg class="abs" style="left:1152px;top:5px" width="19" height="19" viewBox="0 0 19 19"><rect x="6" y="4" width="11" height="10" fill="#c0c8d0" stroke="#606870" stroke-width="1"/><rect x="7.5" y="5.5" width="8" height="7" fill="#e8ecf0"/><path d="M2 1 V7 H5 V1 M3.5 7 V16 H8" stroke="#505050" stroke-width="1.4" fill="none"/><path d="M12 10 L17 18 H7Z" fill="#f8d020" stroke="#a08000" stroke-width=".7"/><rect x="11.6" y="12.5" width="1" height="3" fill="#000"/></svg>
 <svg class="abs" style="left:1176px;top:6px" width="18" height="18" viewBox="0 0 18 18"><rect x="1.5" y="1" width="2" height="16" fill="#f4f4f4" stroke="#707070" stroke-width=".8"/><path d="M4 2.5 Q8 .5 11 2.5 T17 2.5 L14.5 9 Q11 11 8.5 9 T4 9.5Z" fill="#fafafa" stroke="#707070" stroke-width=".9"/></svg>
 <div class="t" style="left:1209px;top:8px;letter-spacing:-.3px">3:25 PM</div>
 <svg class="abs" style="left:1260px;top:9px" width="16" height="12" viewBox="0 0 16 12"><defs><linearGradient id="sd" x1="0" y1="0" x2="1" y2="1"><stop offset="0" stop-color="#2858c0"/><stop offset="1" stop-color="#58b0f0"/></linearGradient></defs><rect x=".5" y=".5" width="15" height="11" fill="url(#sd)" stroke="#90b0e0"/><rect x="2" y="8.5" width="5" height="1.5" fill="#d8e8f8"/></svg>
</div>
<!--TASKBAR_END-->
</body></html>
